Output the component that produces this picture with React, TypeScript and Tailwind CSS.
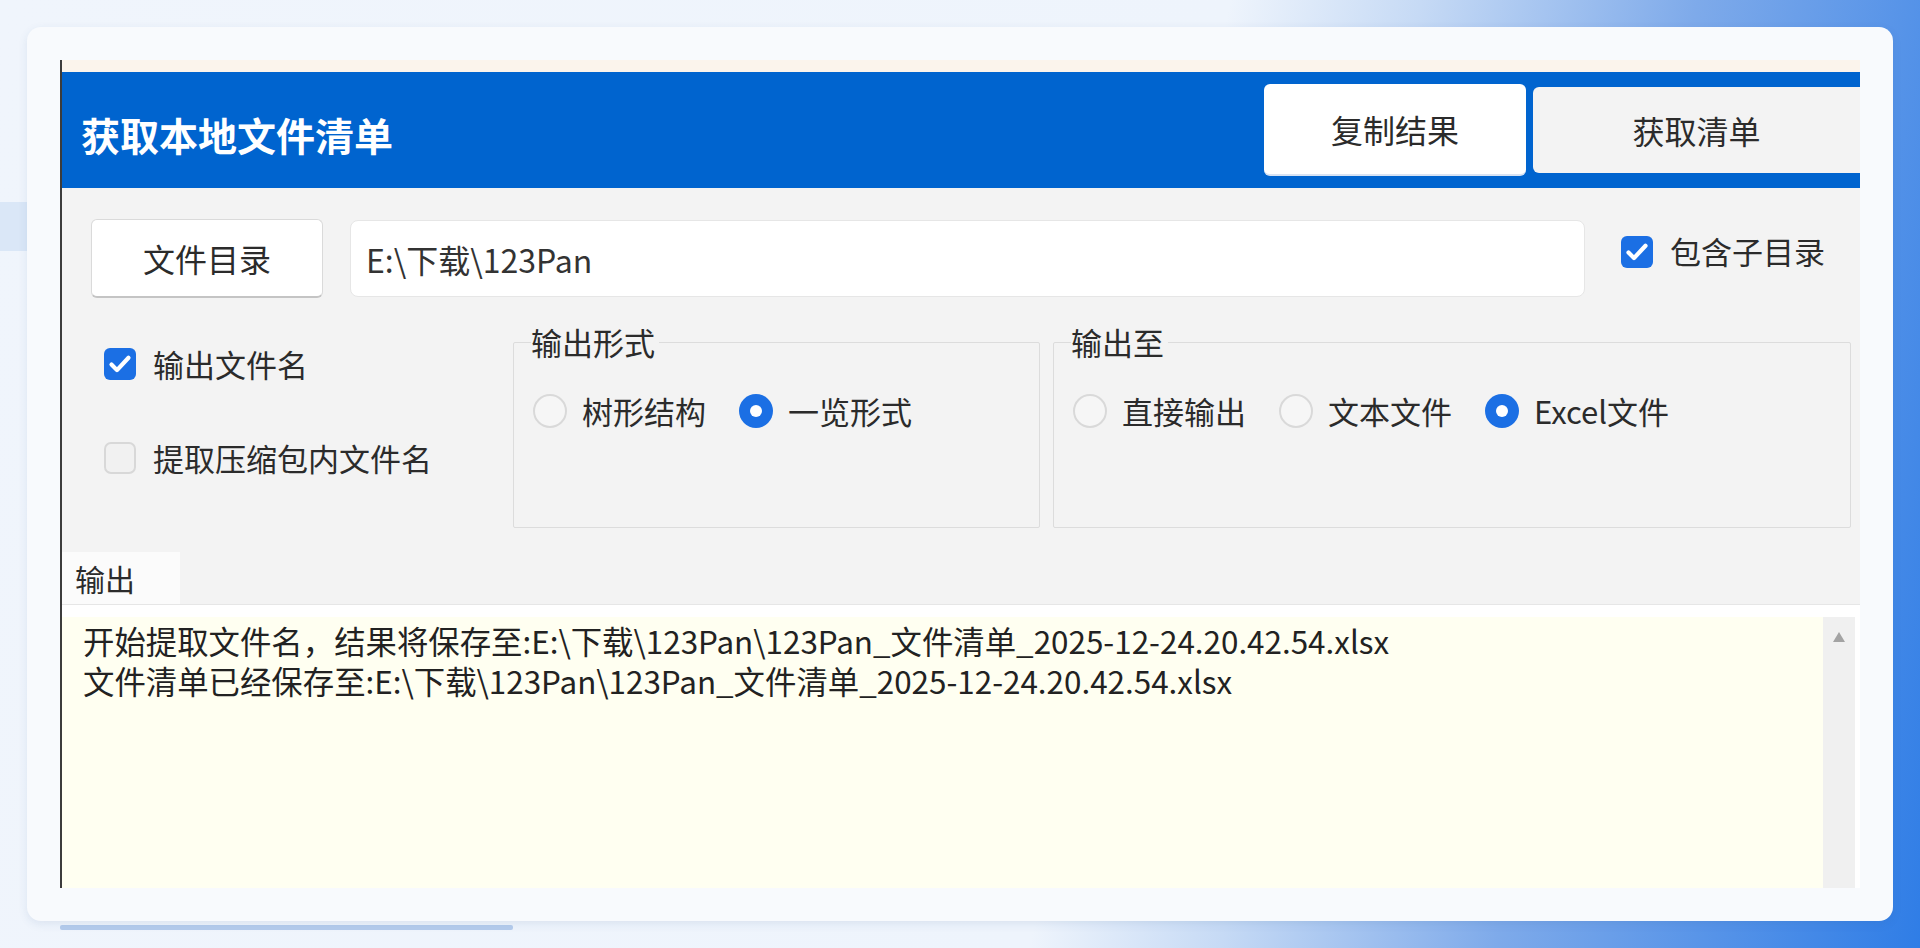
import React from "react";

const FONT = "font-['Noto_Sans_CJK_SC','Noto_Sans',sans-serif]";

function Check({ on }: { on: boolean }) {
  if (!on) {
    return <span className="h-[32px] w-[32px] flex-none rounded-[7px] border-2 border-[#d8d8d8] bg-[#f1f1f1]" />;
  }
  return (
    <span className="flex h-[32px] w-[32px] flex-none items-center justify-center rounded-[6px] bg-[#1b6fe4]">
      <svg viewBox="0 0 32 32" className="h-[32px] w-[32px]">
        <path d="M7.5 16.5l5.5 5.6 11.5-12.4" fill="none" stroke="#fff" strokeWidth="4.2" strokeLinecap="round" strokeLinejoin="round" />
      </svg>
    </span>
  );
}

function Radio({ on, label }: { on: boolean; label: string }) {
  return (
    <span className="flex items-center gap-[15px]">
      {on ? (
        <span className="flex h-[34px] w-[34px] flex-none items-center justify-center rounded-full bg-[#1b6fe4]">
          <span className="h-[12px] w-[12px] rounded-full bg-white" />
        </span>
      ) : (
        <span className="h-[34px] w-[34px] flex-none rounded-full border-2 border-[#d9d9d9] bg-[#f6f6f6]" />
      )}
      <span className="leading-[40px]">{label}</span>
    </span>
  );
}

function Group({ title, width, children }: { title: string; width: string; children: React.ReactNode }) {
  return (
    <fieldset className={`h-[200px] ${width} rounded-[2px] border border-[#dcdcdc] pl-[17px]`}>
      <legend className="pr-[4px] text-[31px] leading-[28px] text-[#2b2b2b]">{title}</legend>
      <div className="mt-[35px] flex items-center gap-[33px] pl-[2px]">{children}</div>
    </fieldset>
  );
}

export default function App() {
  return (
    <div
      className={`relative h-[948px] w-[1920px] overflow-hidden bg-[linear-gradient(102deg,#f0f5fc_0%,#eef4fc_58%,#c6daf5_67%,#7eaaea_80%,#2f7de6_100%)] pl-[27px] pt-[27px] ${FONT}`}
    >
      {/* band behind the card */}
      <div className="absolute left-0 top-[202px] h-[49px] w-[27px] bg-[#dae7f7]" />

      <div className="relative h-[894px] w-[1866px] rounded-[14px] bg-[#f8fafd] pl-[33px] pt-[33px] shadow-[0_3px_10px_rgba(40,80,140,0.1)]">
        {/* app window */}
        <div className="flex h-[828px] w-[1800px] flex-col border-l-2 border-[#3c3c3c]">
          <div className="h-[12px] bg-[#fbf4ec]" />

          {/* header */}
          <div className="flex h-[116px] items-center justify-between bg-[#0064cf]">
            <div className="pl-[19px] pt-[8px] text-[39px] font-bold leading-none text-white">获取本地文件清单</div>
            <div className="flex items-center gap-[7px]">
              <button className="flex h-[92px] w-[262px] items-center justify-center rounded-[6px] border-b-2 border-[#d8e3f3] bg-white text-[32px] text-[#2b2b2b]">
                复制结果
              </button>
              <button className="flex h-[86px] w-[327px] items-center justify-center rounded-l-[6px] bg-[#f3f3f3] text-[32px] text-[#2b2b2b]">
                获取清单
              </button>
            </div>
          </div>

          {/* body */}
          <div className="flex flex-1 flex-col bg-[#f3f3f3] text-[31px] text-[#2b2b2b]">
            <div className="mt-[31px] flex h-[79px] items-center pl-[29px]">
              <button className="flex h-[79px] w-[232px] flex-none items-center justify-center rounded-[6px] border border-b-2 border-[#dadada] border-b-[#c4c4c4] bg-white text-[32px]">
                文件目录
              </button>
              <div className="ml-[27px] flex h-[77px] w-[1235px] flex-none items-center rounded-[8px] border border-[#e6e6e6] bg-white pl-[15px] text-[32px] text-[#333]">
                E:\下载\123Pan
              </div>
              <div className="mb-[14px] ml-[36px] flex items-center gap-[17px]">
                <Check on />
                <span>包含子目录</span>
              </div>
            </div>

            <div className="mt-[30px] flex items-start">
              <div className="mt-[16px] flex w-[451px] flex-none flex-col gap-[54px] pl-[42px]">
                <div className="flex h-[40px] items-center gap-[17px]">
                  <Check on />
                  <span>输出文件名</span>
                </div>
                <div className="flex h-[40px] items-center gap-[17px]">
                  <Check on={false} />
                  <span>提取压缩包内文件名</span>
                </div>
              </div>
              <Group title="输出形式" width="w-[527px]">
                <Radio on={false} label="树形结构" />
                <Radio on label="一览形式" />
              </Group>
              <div className="w-[13px] flex-none" />
              <Group title="输出至" width="w-[798px]">
                <Radio on={false} label="直接输出" />
                <Radio on={false} label="文本文件" />
                <Radio on label="Excel文件" />
              </Group>
            </div>

            {/* tabs */}
            <div className="mt-[24px] flex h-[53px] border-b border-[#e6e6e6]">
              <div className="flex w-[118px] items-center bg-[#fbfbfb] pl-[13px] text-[30px]">输出</div>
            </div>

            {/* output panel */}
            <div className="flex flex-1 bg-white pr-[5px] pt-[12px]">
              <div className="flex-1 bg-[#fffff1] pl-[21px] pt-[4px] text-[31.4px] leading-[40px] text-[#222]">
                <div>开始提取文件名，结果将保存至:E:\下载\123Pan\123Pan_文件清单_2025-12-24.20.42.54.xlsx</div>
                <div>文件清单已经保存至:E:\下载\123Pan\123Pan_文件清单_2025-12-24.20.42.54.xlsx</div>
              </div>
              <div className="flex w-[32px] flex-none justify-center bg-[#f0f0f0] pt-[14px]">
                <svg width="14" height="12" viewBox="0 0 14 12">
                  <path d="M7 1L13 11H1Z" fill="#a3a3a3" />
                </svg>
              </div>
            </div>
          </div>
        </div>
      </div>

      <div className="ml-[33px] mt-[4px] h-[5px] w-[453px] rounded-[2px] bg-[#b5ccec]" />
    </div>
  );
}
